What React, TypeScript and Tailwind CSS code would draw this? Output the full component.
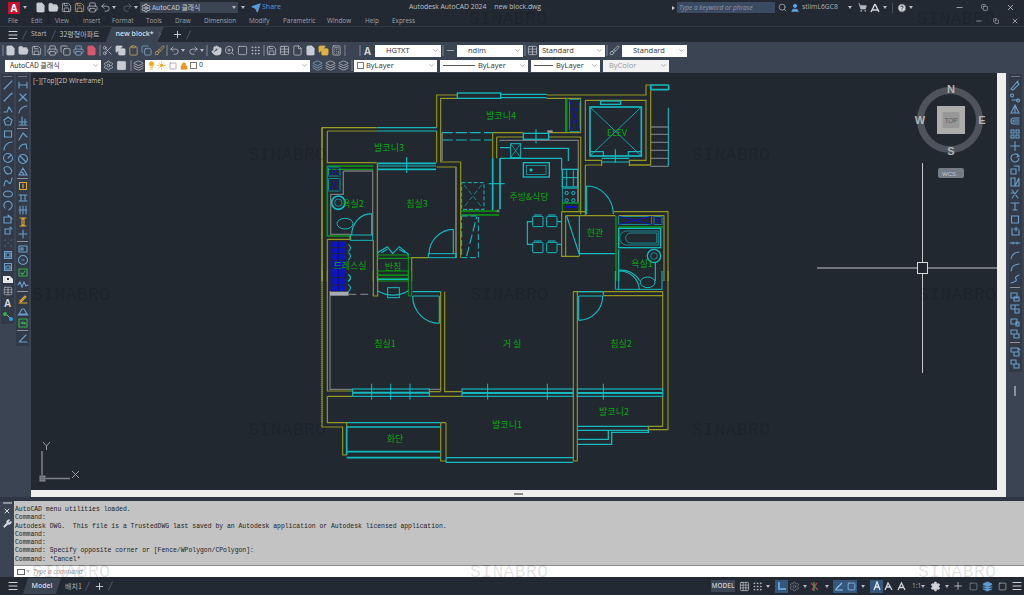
import React from "react";
import { File, FolderOpen, Save, Printer, Undo2, Redo2, Settings, Search, User, ShoppingCart, HelpCircle, X, Minus, Plus, Menu, Wrench, ChevronDown, Copy, Hand, ZoomIn, Square, Lock, Sun, Lightbulb, Send, Grid3x3, Grip, Clipboard, Scissors, Brush, Table, Layers, Calculator } from "lucide-react";

const Y = "#97981f", C = "#14bac0", G = "#0a9a12", A = "#74777b", B = "#0d14b8", BG = "#212830";

function P({ d, c = Y, w = 3.4, dash }: { d: string; c?: string; w?: number; dash?: string }) {
  return <path d={d} fill="none" stroke={c} strokeWidth={w} strokeDasharray={dash} />;
}
function BlueX({ x, y, w, h }: { x: number; y: number; w: number; h: number }) {
  return <g><rect x={x} y={y} width={w} height={h} fill="none" stroke={C} strokeWidth={2} /><path d={`M${x} ${y}L${x + w} ${y + h}M${x + w} ${y}L${x} ${y + h}`} stroke={B} strokeWidth={3} /></g>;
}
function Label({ x, y, t }: { x: number; y: number; t: string }) {
  return <text x={x} y={y} textAnchor="middle" fontSize="9" fill="#0aa80f" fontFamily="'Noto Sans CJK KR','Noto Sans',sans-serif">{t}</text>;
}

function Plan() {
  return (
    <svg className="block w-full h-full" viewBox="31 73 966 415">
      <g transform="translate(310 80) scale(0.33333)">
        <P d="M36 600V140H200M52 150H200M52 150V245H200" />
        <P d="M36 600V140H200" c="#b5b52a" w={2} dash="3 3" />
        <P d="M200 140H380M200 150H380" c={C} />
        <P d="M380 140V42H442M392 150V52H442M392 150V243H452V530M380 258H438V530M380 150V245" />
        <rect x="442" y="36" width="130" height="16" fill="none" stroke={C} strokeWidth="4" />
        <P d="M572 40H710M572 50H710" c={C} />
        <P d="M710 42H1008V12H1022V252H958M710 52H812V155M768 52V155" />
        <P d="M770 52V155" c={G} w={5} />
        <BlueX x={778} y={55} w={32} h={97} />
        <rect x="1022" y="12" width="54" height="14" rx="3" fill="none" stroke={C} strokeWidth="5" />
        <P d="M548 155H640M716 155H812M560 168H640M716 168H812V400M548 155V232M560 168V232" />
        <P d="M396 155H548M396 177H548" c={C} dash="32 10" />
        <P d="M396 155V240" c={A} w={5} />
        <rect x="640" y="157" width="76" height="18" fill="none" stroke={C} strokeWidth="4" />
        <P d="M678 145V187" c={C} />
        <rect x="712" y="148" width="16" height="7" fill="#9a9a9a" />
        <P d="M568 178H805V365" c={A} w={4} />
        <P d="M570 232H755V268M570 200H600M640 202H775V240" c={C} />
        <P d="M548 232V388M570 232V385" c={C} w={5} />
        <P d="M536 308H584" c={C} />
        <P d="M452 390H568M452 402H568" c={G} w={4} />
        <P d="M560 390H568" c={A} w={8} />
        <rect x="640" y="245" width="78" height="43" fill="none" stroke={C} strokeWidth="4" />
        <rect x="650" y="254" width="58" height="26" fill="none" stroke={C} strokeWidth="2" />
        <circle cx="663" cy="267" r="5" fill={C} />
        <rect x="757" y="265" width="46" height="53" fill="none" stroke={C} strokeWidth="4" />
        <path d="M770 268V316M790 268V316M758 290H802" stroke={C} strokeWidth="3" />
        <rect x="757" y="322" width="46" height="44" fill="none" stroke={C} strokeWidth="2" />
        <circle cx="770" cy="336" r="5" fill="none" stroke={C} strokeWidth="3" />
        <circle cx="790" cy="336" r="5" fill="none" stroke={C} strokeWidth="3" />
        <circle cx="770" cy="358" r="5" fill="none" stroke={C} strokeWidth="3" />
        <circle cx="790" cy="358" r="5" fill="none" stroke={C} strokeWidth="3" />
        <rect x="757" y="366" width="50" height="26" fill="none" stroke={G} strokeWidth="3" />
        <path d="M765 378H800" stroke={B} strokeWidth="6" />
        <rect x="602" y="188" width="30" height="42" fill="none" stroke={C} strokeWidth="3" />
        <path d="M602 188L632 230M632 188L602 230" stroke={C} strokeWidth="2" />
        <rect x="455" y="305" width="67" height="80" fill="none" stroke={C} strokeWidth="3" strokeDasharray="12 6" />
        <path d="M462 312L515 378M515 312L462 378" stroke={C} strokeWidth="2" strokeDasharray="14 8" />
        <rect x="455" y="405" width="50" height="125" fill="none" stroke={C} strokeWidth="3" strokeDasharray="18 8" />
        <P d="M470 525L500 408" c={C} dash="28 10" />
        {[[668, 398], [710, 398], [668, 476], [710, 476]].map(([x, y]) => (
          <g key={`${x}${y}`}><rect x={x} y={y + 8} width="31" height="31" rx="3" fill="none" stroke={C} strokeWidth="3" /><path d={`M${x + 4} ${y + 4}H${x + 27}`} stroke={C} strokeWidth="3" /></g>
        ))}
        <P d="M668 422H652V490H668M742 422H755M742 490H755" c={C} />
        <P d="M826 58H1008V238H958V255M826 58V238H875V255M826 252H875M958 252H1022M826 252V404" />
        <rect x="840" y="78" width="154" height="147" fill="none" stroke={C} strokeWidth="5" />
        <path d="M840 78L994 225M994 78L840 225" stroke={C} strokeWidth="2.500" />
        <rect x="872" y="60" width="60" height="10" fill="none" stroke={C} strokeWidth="4" />
        <P d="M875 232H958M875 243H958M880 225V212H840M955 225V212H994" c={C} />
        <P d="M916 205V245" c={C} />
        <P d="M1022 138H1075M1022 160H1075M1022 184H1075M1022 208H1075M1022 232H1075M1022 256H1075" c={A} w={4} />
        <P d="M1075 80V256" c={C} />
        <P d="M755 392H826M755 392V526H808M767 404V526M767 404H916" />
        <P d="M830 315V400M830 315A80 85 0 0 1 910 400" c={C} />
        <P d="M770 405L808 520M808 404V526M808 518H916" c={C} />
        <P d="M912 392H1074V600M926 404H1062V600" />
        <P d="M918 404V600" c={G} w={4} />
        <P d="M926 438H1060" c={G} w={4} />
        <BlueX x={926} y={406} w={98} h={24} />
        <BlueX x={1032} y={406} w={24} h={24} />
        <rect x="926" y="442" width="126" height="58" fill="none" stroke={C} strokeWidth="4" />
        <path d="M950 450H1045V492H950A21 21 0 0 1 950 450Z" fill="none" stroke={C} strokeWidth="2" />
        <path d="M962 456H1040V486H962A15 15 0 0 1 962 456Z" fill="none" stroke={C} strokeWidth="2" />
        <circle cx="1032" cy="525" r="20" fill="none" stroke={C} strokeWidth="4" />
        <circle cx="1032" cy="525" r="10" fill="none" stroke={C} strokeWidth="2" />
        <P d="M926 505V600M1036 545V600M926 568A65 65 0 0 1 990 600" c={C} />
        <P d="M52 255H190M52 265H190" c={G} w={4} />
        <P d="M52 255V465H122" c={G} w={5} />
        <P d="M36 600V140" />
        <BlueX x={55} y={258} w={35} h={27} />
        <BlueX x={55} y={292} w={35} h={38} />
        <P d="M100 270H188V462M100 270V340H62V460H122" c={A} w={4} />
        <circle cx="85" cy="365" r="20" fill="none" stroke={C} strokeWidth="5" />
        <circle cx="85" cy="365" r="11" fill="none" stroke={C} strokeWidth="2" />
        <ellipse cx="105" cy="428" rx="24" ry="16" fill="none" stroke={C} strokeWidth="3" />
        <P d="M125 462A60 64 0 0 1 185 398M185 398V462" c={C} />
        <rect x="122" y="462" width="66" height="16" fill="none" stroke={C} strokeWidth="3" />
        <P d="M52 475H120V465M52 475V600M190 478V600M202 245V600" />
        <rect x="62" y="482" width="46" height="118" fill={B} />
        <P d="M62 500H108M62 518H108M62 538H108M62 560H108M62 580H108" c={BG} w={3} />
        <P d="M85 482V600" c="#0a0a70" w={2} />
        <P d="M115 490Q128 500 115 512M115 515Q128 525 115 537M115 580Q128 590 115 600" c={C} />
        <P d="M203 247H378M203 265H378" c={C} w={5} />
        <P d="M203 255H378" c={C} w={3} />
        <P d="M290 228V276" c={C} />
        <P d="M438 258V530" c={A} w={4} />
        <P d="M357 520A75 75 0 0 1 430 445M430 445V520" c={C} />
        <rect x="355" y="518" width="83" height="12" fill="none" stroke={C} strokeWidth="3" />
        <P d="M203 528V515L232 497L248 518L268 497L295 520V528M214 515L232 505M268 505L285 515" c={C} />
        <P d="M202 522H295V600M295 530H355" c={G} w={3} />
        <P d="M305 600V530H355" />
        <P d="M203 532H295M203 582H295" c={G} />
        <rect x="203" y="592" width="92" height="8" fill="none" stroke={G} strokeWidth="3" />
      </g>
      <g transform="translate(310 270) scale(0.33333)">
        <P d="M36 0V468H98V552H110M52 0V360H128M52 376V455H110V468M52 376H128" />
        <P d="M36 0V468" c="#b5b52a" w={2} dash="3 3" />
        <P d="M60 60V355H128M358 355H392" c={A} w={4} />
        <P d="M358 362H392M358 376H456M392 62V360M404 62V362H456" />
        <P d="M190 0V75H203V0" />
        <rect x="62" y="0" width="46" height="60" fill={B} />
        <P d="M62 20H108M62 42H108" c={BG} w={3} />
        <P d="M85 0V60" c="#0a0a70" w={2} />
        <rect x="60" y="62" width="56" height="12" fill="#a8acae" />
        <P d="M115 70H190" c={A} w={4} dash="24 12" />
        <P d="M115 10Q128 20 115 32M115 40Q128 50 115 62" c={C} />
        <rect x="203" y="0" width="92" height="13" fill="none" stroke={G} strokeWidth="3" />
        <P d="M295 0V75H305V0" c={G} w={3} />
        <P d="M203 25H295M203 60Q250 85 295 60" c={C} />
        <rect x="233" y="50" width="35" height="30" fill="none" stroke={C} strokeWidth="3" />
        <P d="M308 62H392M308 75H388M388 75V157M308 75A80 82 0 0 0 388 157" c={C} />
        <rect x="128" y="354" width="230" height="22" fill="none" stroke={C} strokeWidth="3.500" />
        <path d="M128 365H358" stroke={C} strokeWidth="6" />
        <path d="M185 338V386M242 338V386M300 338V386" stroke={C} strokeWidth="3" />
        <rect x="456" y="354" width="334" height="22" fill="none" stroke={C} strokeWidth="3.500" />
        <path d="M456 366H790" stroke={C} strokeWidth="6" />
        <path d="M533 338V386M712 338V386" stroke={C} strokeWidth="3" />
        <P d="M790 62V570M802 62V570M790 62H802M802 62H1058V360M880 74H1058M1074 0V476H1015M1058 376V466H1015V480" />
        <P d="M1066 476H1030" c="#b5b52a" w={2} dash="3 3" />
        <rect x="802" y="354" width="256" height="22" fill="none" stroke={C} strokeWidth="3.500" />
        <path d="M802 366H1058" stroke={C} strokeWidth="6" />
        <path d="M880 338V386" stroke={C} strokeWidth="3" />
        <P d="M806 62H880V74M806 75H878M806 75V148M878 75A72 73 0 0 1 806 148" c={C} />
        <P d="M916 0V55H1056V0M926 0V55" c={C} w={3} />
        <P d="M926 0A60 58 0 0 1 988 55" c={C} />
        <ellipse cx="1013" cy="34" rx="22" ry="16" fill="none" stroke={C} strokeWidth="3" />
        <P d="M802 466H1015M802 478H1015V484H905V520H802M895 478V505H802" c={C} w={4} />
        <P d="M392 455V570H408M408 455V558M392 455H408" />
        <P d="M408 560H790M408 574H790M408 560V574" c={C} w={4} />
        <P d="M110 455H392M110 468H392" c={C} w={4} />
        <P d="M110 468V552M110 542H392M110 560H392" c={C} w={5} />
        <P d="M790 570H802" />
      </g>
      <Label x={501} y={118} t="발코니4" />
      <Label x={389} y={150} t="발코니3" />
      <text x={617} y={135} textAnchor="middle" fontSize="9" fill="#0aa80f" fontFamily="'Noto Sans',sans-serif">ELEV</text>
      <Label x={529} y={199} t="주방&식당" />
      <Label x={417} y={206} t="침실3" />
      <Label x={353} y={206} t="욕실2" />
      <Label x={350} y={268} t="드레스실" />
      <Label x={393} y={269} t="반침" />
      <Label x={595} y={235} t="현관" />
      <Label x={642} y={266} t="욕실1" />
      <Label x={385} y={346} t="침실1" />
      <Label x={512} y={346} t="거 실" />
      <Label x={621} y={346} t="침실2" />
      <Label x={614} y={414} t="발코니2" />
      <Label x={507} y={427} t="발코니1" />
      <Label x={395} y={441} t="화단" />

      <path d="M817 267H917M928 267H997M922.500 162V261M922.500 273V372" stroke="#c4c6c8" strokeWidth="1" />
      <rect x="917.500" y="261.500" width="10" height="11" fill="none" stroke="#d8dadc" />

      <circle cx="950" cy="119" r="29.500" fill="none" stroke="#4f545c" strokeWidth="7" />
      <rect x="937" y="105" width="28" height="28" fill="#adadad" />
      <rect x="942.500" y="111" width="17" height="16" fill="#979797" />
      <text x="951" y="121.500" textAnchor="middle" fontSize="6.500" fill="#5c5c5c" fontFamily="'Liberation Sans',sans-serif">TOP</text>
      <g fontSize="11" fontWeight="700" fill="#b4b4b4" fontFamily="'Liberation Sans',sans-serif" textAnchor="middle">
        <text x="951" y="92">N</text>
        <text x="920" y="123">W</text>
        <text x="982" y="123">E</text>
        <text x="951" y="154">S</text>
      </g>
      <rect x="938" y="167" width="26" height="10" rx="2" fill="#767c86" />
      <text x="949" y="174.500" textAnchor="middle" fontSize="6" fill="#c2c5ca" fontFamily="'Liberation Sans',sans-serif">WCS</text>

      <path d="M42 450V474M46 477.500H70" stroke="#7f8288" strokeWidth="1.500" />
      <rect x="40" y="475" width="5" height="5" fill="#6a6d72" stroke="#8a8d92" />
      <path d="M43 441L46.500 445L50 441M46.500 445V449M72 470L79 477M79 470L72 477" stroke="#9a9da2" strokeWidth="1" fill="none" />
    </svg>
  );
}

function T({ i: I, c = "text-[#c8ccd2]", fill = false, s = 11 }: { i: any; c?: string; fill?: boolean; s?: number }) {
  return <span className={`flex items-center justify-center w-[13px] h-[13px] shrink-0 ${c}`}><I size={s} strokeWidth={1.5} fill={fill ? "currentColor" : "none"} /></span>;
}
function Caret() {
  return <span className="block w-0 h-0 shrink-0 border-x-[2px] border-x-transparent border-t-[3px] border-t-[#b5bac2]" />;
}
function GripV() {
  return <span className="block w-[2px] h-[11px] bg-[#5d6675] shrink-0" />;
}
function Combo({ w, children, dim }: { w: string; children: React.ReactNode; dim?: boolean }) {
  return (
    <div className={`${w} h-[12px] shrink-0 flex items-center text-[7.500px] pl-[3px] pr-[2px] ${dim ? "text-[#9a9a9a] bg-[#f2f2f2]" : "text-[#333] bg-white"}`}>
      <div className="flex-1 flex items-center min-w-0 whitespace-nowrap">{children}</div>
      <ChevronDown size={7} className="text-[#777] shrink-0" />
    </div>
  );
}

const leftA = [
  "M2 10L10 2", "M2 10L10 2M2 10h1M9 3h1", "M2 9h3l2-5 3 5", "M6 2l4 3-1.500 5h-5L2 5zM6 6h.1", "M2.500 3h7v6h-7z",
  "M2 10A8 8 0 0 1 10 2", "M10.500 6A4.500 4.500 0 1 1 1.500 6a4.500 4.500 0 0 1 9 0zM6 6L9 3", "M2 4q3-3 6 0t1 5q-3 2-5 0t-2-5z", "M2 10Q3 2 6 6t4-4", "M1.500 6a4.500 3 0 1 0 9 0a4.500 3 0 1 0-9 0",
  "M3 8A4 4 0 1 1 9 8l-2 2", "M2 4h7v6H2zM6 2l4 4", "M3 4h5v5H3zM8 2l2 2", "M3 3h.1M9 3h.1M6 6h.1M3 9h.1M9 9h.1", "M2.500 2.500h7v7h-7zM4 4h4v4H4z",
  "M2.500 2.500h7v7h-7zM4 5h4v3H4z", "M2 3h8v7H2zM6 5h2", "M2 3h8v7H2zM2 5.500h8M2 8h8M5 3v7M8 3v7", "", "M3 4h.1M9 9h.1M3 4L9 9",
];
const leftB = [
  "M2 3v6M10 3v6M2 6h8", "M3 3l3 3 3-3M6 6l4 4M6 6l-4 4", "M2 10A8 8 0 0 1 10 3", "M2 10h8M5 2v8M8 4v6M2 7h8", null,
  "M2 10L6 3 10 7", "M2 8A7 7 0 0 1 9 3L10 8", "M6 1.500A4.500 4.500 0 1 0 6 10.500 4.500 4.500 0 1 0 6 1.500zM3 3L9 9", "M2 10h8L6 3zM4 7q2 0 3 3", null,
  "M2.500 2.500h7v7h-7zM6 4v4", "M2 3h8M2 9h8M4 3v6M8 3v6", "M3 2v8M6 2v8M9 2v8M2 6h8", "M3 2h6M3 10h6M5 3h2v6H5z", "M6 2v8M2 6h8", null,
  "M2 3h8v6H2zM4 5h2v2H4z", "M6 1.500A4.500 4.500 0 1 0 6 10.500 4.500 4.500 0 1 0 6 1.500zM5 6h2", "M2 3h8v7H2zM4 7l1.500 1.500L8 5", "M1 7l2-3 2 5 2-5 2 4 2-1", null,
  "M2 10h8M3 8l5-5 1 1-5 5z", "M2 9l3-5h2l3 5zM1 10h10", "M2 2h8v8H2zM4 6q2-2 4 0t-4 0", null, "M2 10h8M3 9L9 3",
];
function Glyph({ d }: { d: string }) {
  const amber = d === "M2.500 2.500h7v7h-7zM6 4v4" || d === "M3 2h6M3 10h6M5 3h2v6H5z" || d === "M2 10h8M3 8l5-5 1 1-5 5z";
  const green = d === "M2 3h8v7H2zM4 7l1.500 1.500L8 5" || d === "M2 2h8v8H2zM4 6q2-2 4 0t-4 0";
  return (
    <svg width="12" height="12" viewBox="0 0 12 12" fill="none" className="shrink-0">
      <path d={d} stroke={amber ? "#e0a92e" : green ? "#35b04a" : "#6a9fcc"} strokeWidth="1.100" strokeLinecap="round" />
    </svg>
  );
}

function LeftBars() {
  return (
    <aside className="w-[31px] shrink-0 bg-[#3b4453] flex items-start gap-[2px] pl-[1px] pt-[1px]">
      <div className="w-[13px] bg-[#323a48] flex flex-col items-center pb-[2px]">
        <div className="w-[9px] h-[1px] bg-[#6b7484] my-[2px]" />
        {leftA.map((d, i) => (
          <div key={i} className="h-[12.150px] flex items-center justify-center">
            {i === 18 ? <span className="text-[10px] leading-none font-bold text-[#d5d8dc] font-['Liberation_Sans']">A</span>
              : i === 19 ? <svg width="12" height="12" viewBox="0 0 12 12"><circle cx="3" cy="4" r="2" fill="#35b04a" /><circle cx="9" cy="9" r="2" fill="#2f9be0" /><path d="M5 5L8 8" stroke="#aaa" /></svg>
              : i === 16 ? <svg width="12" height="12" viewBox="0 0 12 12"><path d="M1 3h7l3 3v4H1z" fill="#e4e6e8" /><rect x="5" y="5" width="2" height="2" fill="#333" /></svg>
              : i === 17 ? <Table size={10} className="text-[#d0d3d8]" strokeWidth={1.3} />
              : <Glyph d={d} />}
          </div>
        ))}
      </div>
      <div className="w-[13px] bg-[#323a48] flex flex-col items-center pb-[2px]">
        <div className="w-[9px] h-[1px] bg-[#6b7484] my-[2px]" />
        {leftB.map((d, i) => d === null
          ? <div key={i} className="w-[11px] h-[1px] bg-[#8b929e] my-[1px]" />
          : <div key={i} className="h-[11.900px] flex items-center justify-center"><Glyph d={d} /></div>)}
      </div>
    </aside>
  );
}

const rightA = [
  "M2 10l6-7 2 2-6 6zM8 3l1-1", "M3 3a1.500 1.500 0 1 0 .1 0M3 9h6M9 8a1.500 1.500 0 1 0 .1 0", "M6 2L2 10h8zM6 4v6", "M10 3H5a3 3 0 0 0 0 6h5M10 5H5a1 1 0 0 0 0 2h5", "M2 2h3v3H2zM7 2h3v3H7zM2 7h3v3H2zM7 7h3v3H7z", "M6 1.500v9M1.500 6h9",
  "M9.500 4A4 4 0 1 0 10 6M8 2l2 2-2 1", "M2 5h5v5H2zM5 2h5v5", "M2 2h4v8H2zM6 10L10 2v8z", "M3 2l6 8M9 2L3 10M2 5h3", "M2 3h8M6 3v7M4 10h4", "M2.500 3h7v7h-7z",
  "M3 3v7h7V5M7 2v4M5 4h4", "M1 6h10M4 5v2M8 5v2", "M2 10A8 8 0 0 1 10 3", "M2 10A6 8 0 0 1 6 4l4-1", "M2 10q7-2 5-4T10 2",
];
const rightB = ["M2 2h6v5H2zM5 6h5v4H5z", "M2 2h4v4H2zM6 6h4v4H6zM6 2h4", "M2 3h6v5H2zM7 6h3v4H7z", "M2 2h6v4H2zM5 6h5v4H5z"];
const rightC = ["M2 2h7v4H2zM5 6h5v4H5zM9 2l2 2", "M2 2h5v4H2zM5 6h5v4H5z"];

function RightBar() {
  return (
    <aside className="w-[18px] shrink-0 bg-[#3b4453] flex flex-col items-center pt-[1px] relative">
      <div className="w-[13px] bg-[#323a48] flex flex-col items-center pb-[2px]">
        <div className="w-[9px] h-[1px] bg-[#6b7484] my-[2px]" />
        {rightA.map((d, i) => <div key={i} className="h-[12.150px] flex items-center justify-center"><Glyph d={d} /></div>)}
        <div className="w-[10px] h-[1px] bg-[#8b929e] my-[2px]" />
        {rightB.map((d, i) => <div key={i} className="h-[12.500px] flex items-center justify-center"><Glyph d={d} /></div>)}
        <div className="w-[10px] h-[1px] bg-[#8b929e] my-[2px]" />
        {rightC.map((d, i) => <div key={i} className="h-[12.500px] flex items-center justify-center"><Glyph d={d} /></div>)}
      </div>
      <div className="mt-[14px] w-[2px] h-[10px] bg-[#8b929e]" />
    </aside>
  );
}

const marks: [number, number][] = [
  [32, 9], [469, 9], [917, 9], [248, 145], [692, 145], [32, 285], [470, 285], [918, 285], [248, 420], [692, 420], [32, 562], [470, 562], [918, 562],
];

export default function App() {
  const menus: [string, string][] = [
    ["File", "w-[23px]"], ["Edit", "w-[24px]"], ["View", "w-[28px]"], ["Insert", "w-[29px]"], ["Format", "w-[34px]"], ["Tools", "w-[29px]"], ["Draw", "w-[29px]"],
    ["Dimension", "w-[45px]"], ["Modify", "w-[34px]"], ["Parametric", "w-[44px]"], ["Window", "w-[38px]"], ["Help", "w-[27px]"], ["Express", "w-[30px]"],
  ];
  return (
    <div className="relative w-[1024px] h-[595px] overflow-hidden bg-[#222933] flex flex-col font-['Open_Sans','Noto_Sans_CJK_KR',sans-serif] text-[#b9bdc4] select-none">
      <header className="h-[15px] shrink-0 flex items-center text-[7px] whitespace-nowrap [&>*]:shrink-0">
        <div className="w-[409px] flex items-center [&>*]:shrink-0">
          <div className="ml-[8px] w-[12px] h-[12px] bg-[#c5122d] flex items-center justify-center text-white text-[10px] font-bold leading-none">A</div>
          <span className="ml-[3px]"><Caret /></span>
          <div className="ml-[7px] flex items-center">
            <T i={File} fill /><T i={FolderOpen} fill /><T i={Save} /><T i={Save} c="text-[#d5b36a]" /><T i={Printer} />
            <T i={Undo2} /><span className="mr-[5px]"><Caret /></span><T i={Redo2} c="text-[#6b7280]" /><Caret />
          </div>
          <div className="ml-[2px] w-[98px] h-[11px] bg-[#3b4453] flex items-center pl-[1px] pr-[2px]">
            <Settings size={10} className="text-[#d5d8dc]" />
            <span className="ml-[1px] flex-1 text-[6.800px] text-[#c8ccd2] font-['Noto_Sans_CJK_KR']">AutoCAD 클래식</span>
            <Caret />
          </div>
          <span className="ml-[3px]"><Caret /></span>
          <Send size={10} className="ml-[6px] text-[#5b9bd5]" fill="currentColor" />
          <span className="ml-[1px] text-[#5b9bd5]">Share</span>
        </div>
        <div className="w-[263px] flex gap-[8px] text-[#bcc0c6] text-[6.800px]"><span>Autodesk AutoCAD 2024</span><span>new block.dwg</span></div>
        <span className="w-0 h-0 border-y-[2px] border-y-transparent border-l-[3px] border-l-[#c8ccd2]" />
        <div className="ml-[2px] w-[98px] h-[11px] bg-[#3b4a63] flex items-center pl-[2px] italic text-[6.500px] text-[#8f98a6]">Type a keyword or phrase</div>
        <Search size={9} className="ml-[3px] text-[#a8adb5]" />
        <User size={10} className="ml-[3px] text-[#5aa7e0]" fill="currentColor" />
        <span className="ml-[2px] w-[46px] text-[#aab0b8] text-[6.800px]">stlimL6GC8</span>
        <Caret />
        <ShoppingCart size={9} className="ml-[6px] text-[#b5b9c0]" fill="currentColor" />
        <svg width="10" height="10" viewBox="0 0 10 10" className="ml-[3px]"><path d="M5 1L1 9M5 1L9 9M2.500 7H7.500" stroke="#d0d3d8" strokeWidth="1.500" /></svg>
        <span className="ml-[3px]"><Caret /></span>
        <span className="ml-[5px] w-px h-[10px] bg-[#4a5260]" />
        <HelpCircle size={10} className="ml-[4px] text-[#222933]" fill="#d0d3d8" />
        <span className="ml-[2px]"><Caret /></span>
        <Minus size={9} className="ml-[42px] text-[#c0c4ca]" />
        <Copy size={7} className="ml-[17px] text-[#c0c4ca]" />
        <X size={9} className="ml-[18px] text-[#d0d3d8]" />
      </header>
      <nav className="h-[11px] shrink-0 flex items-center pl-[8px] text-[6.400px] text-[#9ea3ab] whitespace-nowrap relative [&>*]:shrink-0">
        {menus.map(([m, c]) => <span key={m} className={c}>{m}</span>)}
        <Minus size={8} className="ml-auto mr-[10px] text-[#c0c4ca]" />
        <Copy size={6} className="mr-[12px] text-[#c0c4ca]" />
        <X size={8} className="mr-[5px] text-[#d0d3d8]" />
      </nav>
      <div className="h-[16px] shrink-0 flex items-center text-[7px] border-t border-[#2f3743] whitespace-nowrap">
        <Menu size={12} className="ml-[7px] text-[#d0d3d8]" />
        <span className="ml-[5px] w-px h-[10px] bg-[#4a5260] rotate-[25deg]" />
        <span className="ml-[6px] text-[#b9bdc4]">Start</span>
        <span className="ml-[6px] w-px h-[10px] bg-[#4a5260] rotate-[25deg]" />
        <span className="ml-[6px] text-[#b9bdc4] font-['Noto_Sans_CJK_KR','Open_Sans']">32평형아파트</span>
        <div className="ml-[6px] w-[58px] h-[15px] bg-[#3b4453] [clip-path:polygon(6px_0,100%_0,calc(100%-6px)_100%,0_100%)] flex items-center pl-[10px] text-[#d8dbe0] font-semibold">
          new block*<X size={7} className="ml-[4px] text-[#c0c4ca]" />
        </div>
        <Plus size={11} className="ml-[8px] text-[#d0d3d8]" />
        <span className="ml-[5px] w-px h-[10px] bg-[#4a5260] rotate-[25deg]" />
      </div>
      <div className="h-[31px] shrink-0 bg-[#3b4453] flex flex-col justify-center gap-[2px] pt-[1px]">
        <div className="flex items-center h-[13px] pl-[2px] whitespace-nowrap">
          <GripV />
          <span className="flex items-center"><T i={File} fill /><T i={FolderOpen} fill /><T i={Save} /></span>
          <span className="ml-[1px]"><GripV /></span>
          <span className="flex items-center"><T i={Printer} /><T i={Copy} /><T i={Printer} c="text-[#8db7dd]" /><T i={File} c="text-[#d8576a]" fill /></span>
          <span className="ml-[1px]"><GripV /></span>
          <span className="flex items-center"><T i={Scissors} /><T i={Copy} fill /><T i={Clipboard} c="text-[#d9b36c]" /><T i={Copy} c="text-[#8db7dd]" /><T i={Brush} c="text-[#d9b36c]" /></span>
          <GripV />
          <span className="flex items-center"><T i={Undo2} /><Caret /><span className="w-[2px]" /><T i={Redo2} /><Caret /></span>
          <span className="ml-[2px]"><GripV /></span>
          <span className="ml-[2px] flex items-center"><T i={Hand} fill /><T i={ZoomIn} /><T i={Square} /><T i={Grip} /></span>
          <span className="ml-[1px]"><GripV /></span>
          <span className="flex items-center"><T i={Save} /><T i={Table} /><T i={File} /><T i={File} fill /><T i={Copy} c="text-[#e0b040]" fill /><T i={Calculator} /></span>
          <span className="ml-[1px]"><GripV /></span>
          <span className="ml-[-2px]"><T i={HelpCircle} c="text-[#3b4453]" fill /></span>
          <span className="ml-[2px]"><GripV /></span>
          <span className="ml-[3px] text-[10px] font-bold text-[#d0d3d8] w-[11px] leading-none">A</span>
          <Combo w="w-[66px]"><span className="ml-[8px]">HGTXT</span></Combo>
          <span className="ml-[1px]"><GripV /></span>
          <T i={Minus} />
          <Combo w="w-[66px]"><span className="ml-[8px]">ndim</span></Combo>
          <span className="ml-[1px]"><GripV /></span>
          <T i={Table} />
          <Combo w="w-[66px]">Standard</Combo>
          <span className="ml-[1px]"><GripV /></span>
          <T i={Brush} />
          <span className="ml-[1px]"><Combo w="w-[65px]"><span className="ml-[8px]">Standard</span></Combo></span>
        </div>
        <div className="flex items-center h-[13px] pl-[5px] whitespace-nowrap">
          <Combo w="w-[96px]"><span className="ml-[2px] text-[7px] font-['Noto_Sans_CJK_KR']">AutoCAD 클래식</span></Combo>
          <span className="ml-[1px] flex items-center"><T i={Settings} /><T i={Square} fill /></span>
          <span className="ml-[2px]"><GripV /></span>
          <T i={Layers} />
          <div className="w-[165px] h-[12px] shrink-0 bg-white flex items-center text-[7px] text-[#333] pl-[2px] pr-[2px]">
            <Lightbulb size={9} className="text-[#f0a820]" fill="currentColor" />
            <Sun size={9} className="ml-[1px] text-[#f0a820]" fill="currentColor" />
            <Square size={8} className="ml-[3px] text-[#888]" />
            <Lock size={8} className="ml-[3px] text-[#e09a20]" fill="currentColor" />
            <span className="ml-[2px] w-[7px] h-[7px] border border-[#777]" />
            <span className="ml-[2px] flex-1">0</span>
            <ChevronDown size={7} className="text-[#777]" />
          </div>
          <span className="ml-[1px] flex items-center"><T i={Layers} c="text-[#8db7dd]" /><T i={Layers} /><T i={Layers} /></span>
          <span className="ml-[1px]"><GripV /></span>
          <span className="ml-[1px]"><Combo w="w-[83px]"><span className="w-[7px] h-[7px] border border-[#777] mr-[2px]" />ByLayer</Combo></span>
          <span className="ml-[3px]"><Combo w="w-[88px]"><span className="w-[32px] h-px bg-[#555] mr-[3px]" />ByLayer</Combo></span>
          <span className="ml-[3px]"><Combo w="w-[69px]"><span className="w-[19px] h-px bg-[#555] mr-[3px]" />ByLayer</Combo></span>
          <span className="ml-[3px]"><Combo w="w-[66px]" dim><span className="ml-[3px]">ByColor</span></Combo></span>
        </div>
      </div>
      <main className="flex-1 min-h-0 flex">
        <LeftBars />
        <div className="flex-1 min-w-0 flex flex-col">
          <div className="flex-1 min-h-0 flex">
            <div className="relative flex-1 min-w-0 bg-[#212830]">
              <Plan />
              <span className="absolute left-[2px] top-[5px] text-[6.500px] leading-none text-[#c0c4ca] whitespace-nowrap">[−][Top][2D Wireframe]</span>
            </div>
            <div className="w-[9px] shrink-0 bg-[#eeeeee]" />
          </div>
          <div className="h-[7px] shrink-0 bg-[#eeeeee] flex justify-center items-center">
            <span className="w-[9px] h-[2px] bg-[#888]" />
          </div>
        </div>
        <RightBar />
      </main>
      <section className="h-[80px] shrink-0 flex border-t-[4px] border-[#2e3643]">
        <div className="w-[14px] shrink-0 bg-[#3b4453] flex flex-col items-center pt-[1px] gap-[1px] text-[#d8dbe0]">
          <div className="w-[9px] h-[2px] bg-[#8b929e]" />
          <X size={8} strokeWidth={3} className="mt-[2px]" />
          <Wrench size={9} className="mt-[3px]" fill="currentColor" />
        </div>
        <div className="flex-1 flex flex-col">
          <pre className="flex-1 bg-[#c3c3c3] text-[6.430px] leading-[8.250px] text-[#222] pl-[1px] pt-[5px] font-['Liberation_Mono',monospace] overflow-hidden">{`AutoCAD menu utilities loaded.
Command:
Autodesk DWG.  This file is a TrustedDWG last saved by an Autodesk application or Autodesk licensed application.
Command:
Command:
Command: Specify opposite corner or [Fence/WPolygon/CPolygon]:
Command: *Cancel*`}</pre>
          <div className="h-[12px] shrink-0 bg-white border-t border-[#8a8a8a] flex items-center pl-[3px] text-[6.500px] italic text-[#999]">
            <span className="w-[8px] h-[6px] border border-[#666] shrink-0" />
            <span className="ml-[1px]"><Caret /></span>
            <span className="ml-[3px] whitespace-nowrap">Type a command</span>
          </div>
        </div>
      </section>
      <footer className="h-[18px] shrink-0 bg-[#222933] flex items-center text-[7px] whitespace-nowrap [&>*]:shrink-0">
        <div className="w-[711px] flex items-center [&>*]:shrink-0">
          <Menu size={12} className="ml-[7px] text-[#d0d3d8]" />
          <div className="ml-[4px] w-[38px] h-[16px] bg-[#3b4453] [clip-path:polygon(5px_0,100%_0,calc(100%-5px)_100%,0_100%)] flex items-center justify-center font-semibold text-[#d8dbe0]">Model</div>
          <span className="ml-[4px] text-[#aab0b8] font-['Noto_Sans_CJK_KR']">배치1</span>
          <span className="ml-[5px] w-px h-[10px] bg-[#4a5260] rotate-[25deg]" />
          <Plus size={11} className="ml-[6px] text-[#d0d3d8]" />
          <span className="ml-[5px] w-px h-[10px] bg-[#4a5260] rotate-[25deg]" />
        </div>
        <div className="w-[24px] h-[12px] bg-[#3b4453] flex items-center justify-center text-[6.500px] font-semibold text-[#c8ccd2]">MODEL</div>
        <div className="ml-[2.500px] flex items-center text-[#aab0b8] [&>*]:shrink-0">
          <T i={Grid3x3} /><T i={Grip} />
          <span className="ml-[2px]"><Caret /></span>
          <span className="ml-[5.500px] w-[13px] h-[13px] bg-[#35577c] flex items-center justify-center"><svg width="10" height="10" viewBox="0 0 10 10"><path d="M2 1V8H9" stroke="#6fb6ea" fill="none" strokeWidth="1.500" /></svg></span>
          <T i={Settings} c="text-[#7c828c]" />
          <span className="ml-[2px]"><Caret /></span>
          <svg width="11" height="11" viewBox="0 0 11 11" className="ml-[2px]"><path d="M2 2L9 9M8 2L3 9" stroke="#b5414a" strokeWidth="1.300" /><path d="M5 1V10" stroke="#3d9e52" strokeWidth="1.300" /></svg>
          <span className="ml-[5px]"><Caret /></span>
          <span className="ml-[4px] w-[12px] h-[13px] bg-[#35577c] flex items-center justify-center"><svg width="10" height="10" viewBox="0 0 10 10"><path d="M1 9H9M2 8L8 2" stroke="#8cc7f0" fill="none" strokeWidth="1.200" /></svg></span>
          <span className="w-[12px] h-[13px] bg-[#35577c] flex items-center justify-center"><Square size={9} className="text-[#8cc7f0]" /></span>
          <span className="ml-[4px]"><Caret /></span>
          <span className="ml-[5px] w-[13px] h-[13px] bg-[#35577c] flex items-center justify-center"><svg width="10" height="10" viewBox="0 0 10 10"><path d="M2 9L5 1L8 9M3 6H7" stroke="#e0e8f0" fill="none" strokeWidth="1.300" /></svg></span>
          <svg width="11" height="11" viewBox="0 0 11 11"><path d="M2 9L5 2L9 9M3 6H8" stroke="#d0d3d8" fill="none" strokeWidth="1.300" /></svg>
          <svg width="11" height="11" viewBox="0 0 11 11" className="ml-[2px]"><path d="M2 9L5.500 2L9 9M3.500 6.500H7.500" stroke="#d0d3d8" fill="none" strokeWidth="1.300" /></svg>
          <span className="ml-[5px] w-[8px] text-[6.500px]">1:1</span>
          <span className="ml-[1px]"><Caret /></span>
          <span className="ml-[3.500px]"><T i={Settings} c="text-[#d0d3d8]" fill /></span>
          <span className="ml-[3.500px]"><Caret /></span>
          <span className="ml-[2.500px]"><T i={Plus} c="text-[#d0d3d8]" s={12} /></span>
          <span className="ml-[2px]"><T i={Square} c="text-[#9aa0a8]" s={9} /></span>
          <span className="ml-[1px]"><T i={Layers} c="text-[#5a9ad5]" fill /></span>
          <span className="ml-[2px]"><T i={Square} c="text-[#d0d3d8]" s={9} /></span>
          <Menu size={12} className="ml-[2.500px] text-[#d0d3d8]" />
        </div>
      </footer>
      {marks.map(([x, y]) => (
        <span key={`${x}-${y}`} style={{ left: x, top: y }} className="absolute text-[18px] leading-[20px] tracking-[0.400px] text-black/12 font-['Liberation_Mono',monospace] pointer-events-none">SINABRO</span>
      ))}
    </div>
  );
}
